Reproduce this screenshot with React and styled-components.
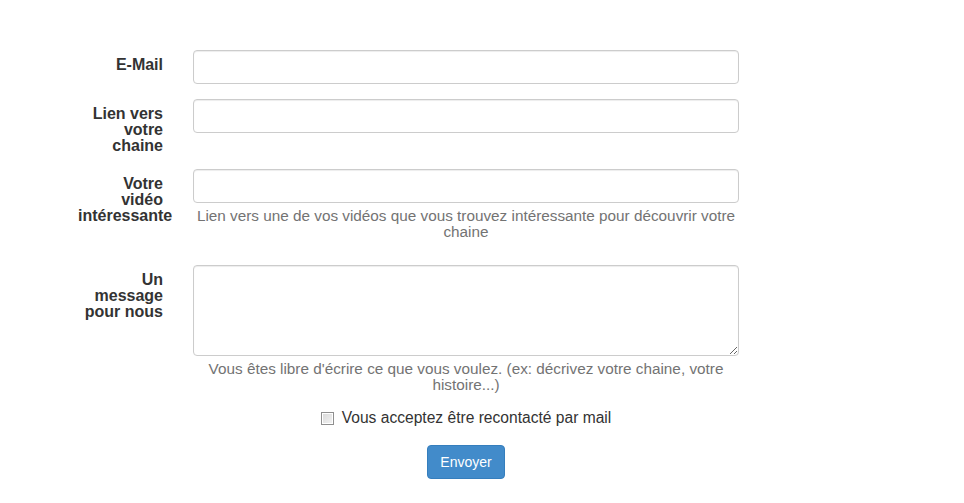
import React from 'react';
import styled, { createGlobalStyle } from 'styled-components';

const GlobalStyle = createGlobalStyle`
    * { box-sizing: border-box; }
    body {
        margin: 0;
        background: #fff;
        font-family: "Liberation Sans", Arial, sans-serif;
        color: #333;
    }
`

const fields = [
    { label: 'E-Mail', type: 'input' },
    { label: 'Lien vers votre chaine', type: 'input' },
    {
        label: 'Votre vidéo intéressante',
        type: 'input',
        help: 'Lien vers une de vos vidéos que vous trouvez intéressante pour découvrir votre chaine',
    },
    {
        label: 'Un message pour nous',
        type: 'textarea',
        help: "Vous êtes libre d'écrire ce que vous voulez. (ex: décrivez votre chaine, votre histoire...)",
        tight: true,
    },
]

const App = () => {
    return (
        <>
            <GlobalStyle />
            <Form onSubmit={e => e.preventDefault()}>
                {fields.map(f => (
                    <Group key={f.label} $tight={f.tight}>
                        <Label>{f.label}</Label>
                        <Control>
                            {f.type === 'textarea' ? <TextArea /> : <Input type="text" />}
                            {f.help && <Help>{f.help}</Help>}
                        </Control>
                    </Group>
                ))}
                <Group>
                    <span />
                    <Control>
                        <CheckRow>
                            <Check type="checkbox" />
                            Vous acceptez être recontacté par mail
                        </CheckRow>
                        <Submit type="submit">Envoyer</Submit>
                    </Control>
                </Group>
            </Form>
        </>
    )
}

export default App;

//styling below this line

const Form = styled.form`
    padding: 50px 0 0 78px;
`

    const Group = styled.div`
        display: grid;
        grid-template-columns: 85px 546px;
        column-gap: 30px;
        margin-bottom: ${p => (p.$tight ? '0' : '15px')};
    `

        const Label = styled.label`
            padding-top: 7px;
            font-size: 16px;
            line-height: 16px;
            font-weight: bold;
            text-align: right;
            color: #333;
        `

        const Control = styled.div`
            display: flex;
            flex-direction: column;
            align-items: center;
        `

        const Input = styled.input`
            width: 100%;
            height: 34px;
            border: 1px solid #ccc;
            border-radius: 4px;
            padding: 6px 12px;
            font-size: 14px;
            box-shadow: inset 0 1px 1px rgba(0,0,0,.075);
            background: #fff;
        `

        const TextArea = styled.textarea`
            width: 100%;
            height: 91px;
            border: 1px solid #ccc;
            border-radius: 4px;
            padding: 6px 12px;
            font-size: 14px;
            box-shadow: inset 0 1px 1px rgba(0,0,0,.075);
            display: block;
        `

        const Help = styled.span`
            margin: 5px 0 10px;
            font-size: 15.3px;
            line-height: 16px;
            color: #737373;
            text-align: center;
        `

        const CheckRow = styled.label`
            display: flex;
            align-items: center;
            gap: 8px;
            padding-top: 7px;
            margin-bottom: 19px;
            font-size: 15.6px;
            line-height: 16px;
            color: #333;
        `

        const Check = styled.input`
            appearance: none;
            width: 13px;
            height: 13px;
            margin: 1px 0 0;
            border: 1px solid #8f8f8f;
            background: linear-gradient(135deg, #d8d8d8, #f4f4f4);
            box-shadow: inset 0 0 0 1px #fff;
        `

        const Submit = styled.button`
            width: 78px;
            height: 34px;
            padding: 6px 12px;
            font-family: "Liberation Sans", Arial, sans-serif;
            font-size: 14px;
            color: #fff;
            background: #428bca;
            border: 1px solid #357ebd;
            border-radius: 4px;
        `
